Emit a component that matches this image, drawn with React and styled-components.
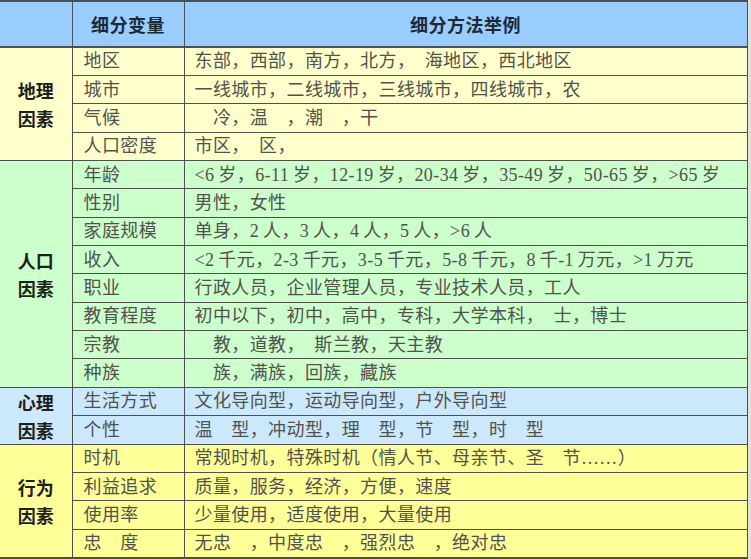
import React from 'react';
import styled, { createGlobalStyle } from 'styled-components';

const GlobalStyle = createGlobalStyle`
  html, body {
    margin: 0;
    padding: 0;
    background: #e2e2dc;
  }
`;

const sections = [
  {
    name: ['地理', '因素'],
    bg: '#ffffcc',
    rows: [
      ['地区', '东部，西部，南方，北方，　海地区，西北地区'],
      ['城市', '一线城市，二线城市，三线城市，四线城市，农'],
      ['气候', '　冷，温　，潮　，干'],
      ['人口密度', '市区，　区，'],
    ],
  },
  {
    name: ['人口', '因素'],
    bg: '#ccffcc',
    rows: [
      ['年龄', '<6 岁，6-11 岁，12-19 岁，20-34 岁，35-49 岁，50-65 岁，>65 岁'],
      ['性别', '男性，女性'],
      ['家庭规模', '单身，2 人，3 人，4 人，5 人，>6 人'],
      ['收入', '<2 千元，2-3 千元，3-5 千元，5-8 千元，8 千-1 万元，>1 万元'],
      ['职业', '行政人员，企业管理人员，专业技术人员，工人'],
      ['教育程度', '初中以下，初中，高中，专科，大学本科，　士，博士'],
      ['宗教', '　教，道教，　斯兰教，天主教'],
      ['种族', '　族，满族，回族，藏族'],
    ],
  },
  {
    name: ['心理', '因素'],
    bg: '#cce8fc',
    rows: [
      ['生活方式', '文化导向型，运动导向型，户外导向型'],
      ['个性', '温　型，冲动型，理　型，节　型，时　型'],
    ],
  },
  {
    name: ['行为', '因素'],
    bg: '#ffff99',
    rows: [
      ['时机', '常规时机，特殊时机（情人节、母亲节、圣　节……）'],
      ['利益追求', '质量，服务，经济，方便，速度'],
      ['使用率', '少量使用，适度使用，大量使用'],
      ['忠　度', '无忠　，中度忠　，强烈忠　，绝对忠'],
    ],
  },
];

const Table = styled.table`
  border-collapse: collapse;
  table-layout: fixed;
  width: 747px;
  border-top: 2px solid #4a4f55;
  border-bottom: 2px solid #4e4e44;
`;

const Col = styled.col`
  width: ${p => p.w}px;
`;

const HeadRow = styled.tr`
  height: 46px;
`;

const BodyRow = styled.tr`
  height: 28.35px;
`;

const HeadCell = styled.th`
  background: #99ccff;
  border: 1px solid #4a5058;
  border-bottom-width: 2px;
  border-left-width: ${p => (p.first ? 0 : 1)}px;
  font-family: "Noto Sans CJK SC", sans-serif;
  font-weight: 700;
  font-size: 18px;
  color: #1d2a36;
  letter-spacing: 0.5px;
  padding: 0;
  text-align: center;
`;

const GroupCell = styled.td`
  background: ${p => p.bg};
  border: 1px solid #4a4f48;
  border-left: 0;
  font-family: "Noto Sans CJK SC", sans-serif;
  font-weight: 700;
  font-size: 18px;
  line-height: 28px;
  color: #1e1e1a;
  text-align: center;
  padding: 0;
`;

const Cell = styled.td`
  background: ${p => p.bg};
  border: 1px solid #4f524c;
  font-family: "Liberation Serif", "Noto Sans CJK SC", serif;
  font-size: 18px;
  line-height: 20px;
  color: #52524c;
  letter-spacing: 0.4px;
  word-spacing: -1px;
  white-space: pre;
  padding: 0 0 0 ${p => p.pad}px;
  overflow: hidden;
`;

export default function App() {
  return (
    <>
      <GlobalStyle />
      <Table>
        <colgroup>
          <Col w={72} />
          <Col w={112} />
          <Col w={563} />
        </colgroup>
        <thead>
          <HeadRow>
            <HeadCell first />
            <HeadCell>细分变量</HeadCell>
            <HeadCell>细分方法举例</HeadCell>
          </HeadRow>
        </thead>
        <tbody>
          {sections.map(sec =>
            sec.rows.map(([variable, text], i) => (
              <BodyRow key={variable}>
                {i === 0 && (
                  <GroupCell bg={sec.bg} rowSpan={sec.rows.length}>
                    {sec.name[0]}
                    <br />
                    {sec.name[1]}
                  </GroupCell>
                )}
                <Cell bg={sec.bg} pad={11}>{variable}</Cell>
                <Cell bg={sec.bg} pad={10}>{text}</Cell>
              </BodyRow>
            ))
          )}
        </tbody>
      </Table>
    </>
  );
}
